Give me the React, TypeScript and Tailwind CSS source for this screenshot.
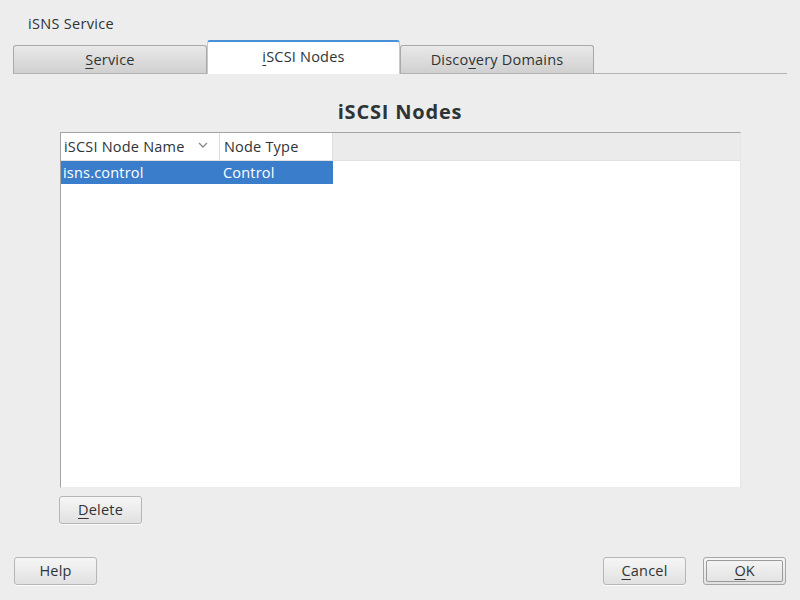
import React from 'react';

const font = "font-['Open_Sans','Noto_Sans',sans-serif]";

const Mn = ({ children }: { children: React.ReactNode }) => (
    <span className="underline decoration-1 underline-offset-[3px]">{children}</span>
);

const btn =
    'flex h-[28px] w-[83px] items-center justify-center rounded-[3px] border border-[#b6b6b3] bg-gradient-to-b from-[#f6f6f6] to-[#e1e1e1] text-[14.5px] tracking-[0.2px] text-[#2e3436] shadow-[0_1px_0_rgba(255,255,255,0.8)]';

const Tab = ({ label, active }: { label: React.ReactNode; active?: boolean }) =>
    active ? (
        <div className="relative -mb-px flex h-[34px] w-[193px] items-center justify-center rounded-t-[3px] border-x border-t-2 border-x-[#c8c8c8] border-t-[#4a90d9] bg-white pb-[2px] text-[14.5px] tracking-[0.2px] text-[#2e3436]">
            {label}
        </div>
    ) : (
        <div className="flex h-[28px] w-[194px] items-center justify-center rounded-t-[3px] border border-b-0 border-[#a9a9a9] bg-gradient-to-b from-[#e9e9e9] to-[#d0d0d0] text-[14.5px] tracking-[0.2px] text-[#2e3436]">
            {label}
        </div>
    );

export default function App() {
    return (
        <div className={`flex h-[600px] w-[800px] flex-col bg-[#ededed] text-[#2e3436] ${font}`}>
            <div className="h-[40px] pl-[28px] pt-[14px] text-[14.5px] leading-[20px] tracking-[0.3px]">iSNS Service</div>

            <div className="mx-[13px] flex h-[34px] items-end border-b border-[#b3b3b3]">
                <Tab label={<><Mn>S</Mn>ervice</>} />
                <Tab active label={<><Mn>i</Mn>SCSI Nodes</>} />
                <Tab label={<>Disco<Mn>v</Mn>ery Domains</>} />
            </div>

            <div className="flex h-[58px] items-center justify-center pt-[17px] text-[20px] font-bold tracking-[0.8px]">
                iSCSI Nodes
            </div>

            <div className="ml-[60px] mr-[59px] flex h-[356px] flex-col border-l border-t border-[#a4a4a4] border-r border-r-[#e6e6e6] border-b border-b-[#ededed] bg-white">
                <div className="flex h-[28px] border-b border-[#e2e2e2] bg-[#ebebeb] text-[14.5px] tracking-[0.2px]">
                    <div className="flex w-[159px] items-center justify-between border-r border-[#dcdcdc] bg-white pl-[3px] pr-[11px]">
                        <span>iSCSI Node Name</span>
                        <svg width="10" height="6" viewBox="0 0 10 6" className="mb-[3px]">
                            <path d="M1 1 L5 5 L9 1" fill="none" stroke="#8a8a8a" strokeWidth="1.3" />
                        </svg>
                    </div>
                    <div className="flex w-[113px] items-center border-r border-[#dcdcdc] bg-white pl-[4px]">Node Type</div>
                </div>
                <div className="flex h-[23px] w-[272px] items-center bg-[#3a7ecb] text-[14.5px] tracking-[0.2px] text-white">
                    <div className="w-[159px] pl-[2px]">isns.control</div>
                    <div className="pl-[3px]">Control</div>
                </div>
            </div>

            <div className="ml-[59px] mt-[8px]">
                <button className={btn}>
                    <Mn>D</Mn>elete
                </button>
            </div>

            <div className="mt-[33px] flex px-[14px]">
                <button className={btn}>Help</button>
                <div className="flex-1" />
                <button className={btn}>
                    <Mn>C</Mn>ancel
                </button>
                <div className="ml-[17px] flex h-[28px] w-[83px] items-center justify-center rounded-[3px] border border-[#a6a6a6] bg-gradient-to-b from-[#f6f6f6] to-[#e1e1e1] p-[2px]">
                    <div className="flex h-full w-full items-center justify-center rounded-[2px] border border-[#9a9a9a] text-[14.5px]">
                        <Mn>O</Mn>K
                    </div>
                </div>
            </div>
        </div>
    );
}
